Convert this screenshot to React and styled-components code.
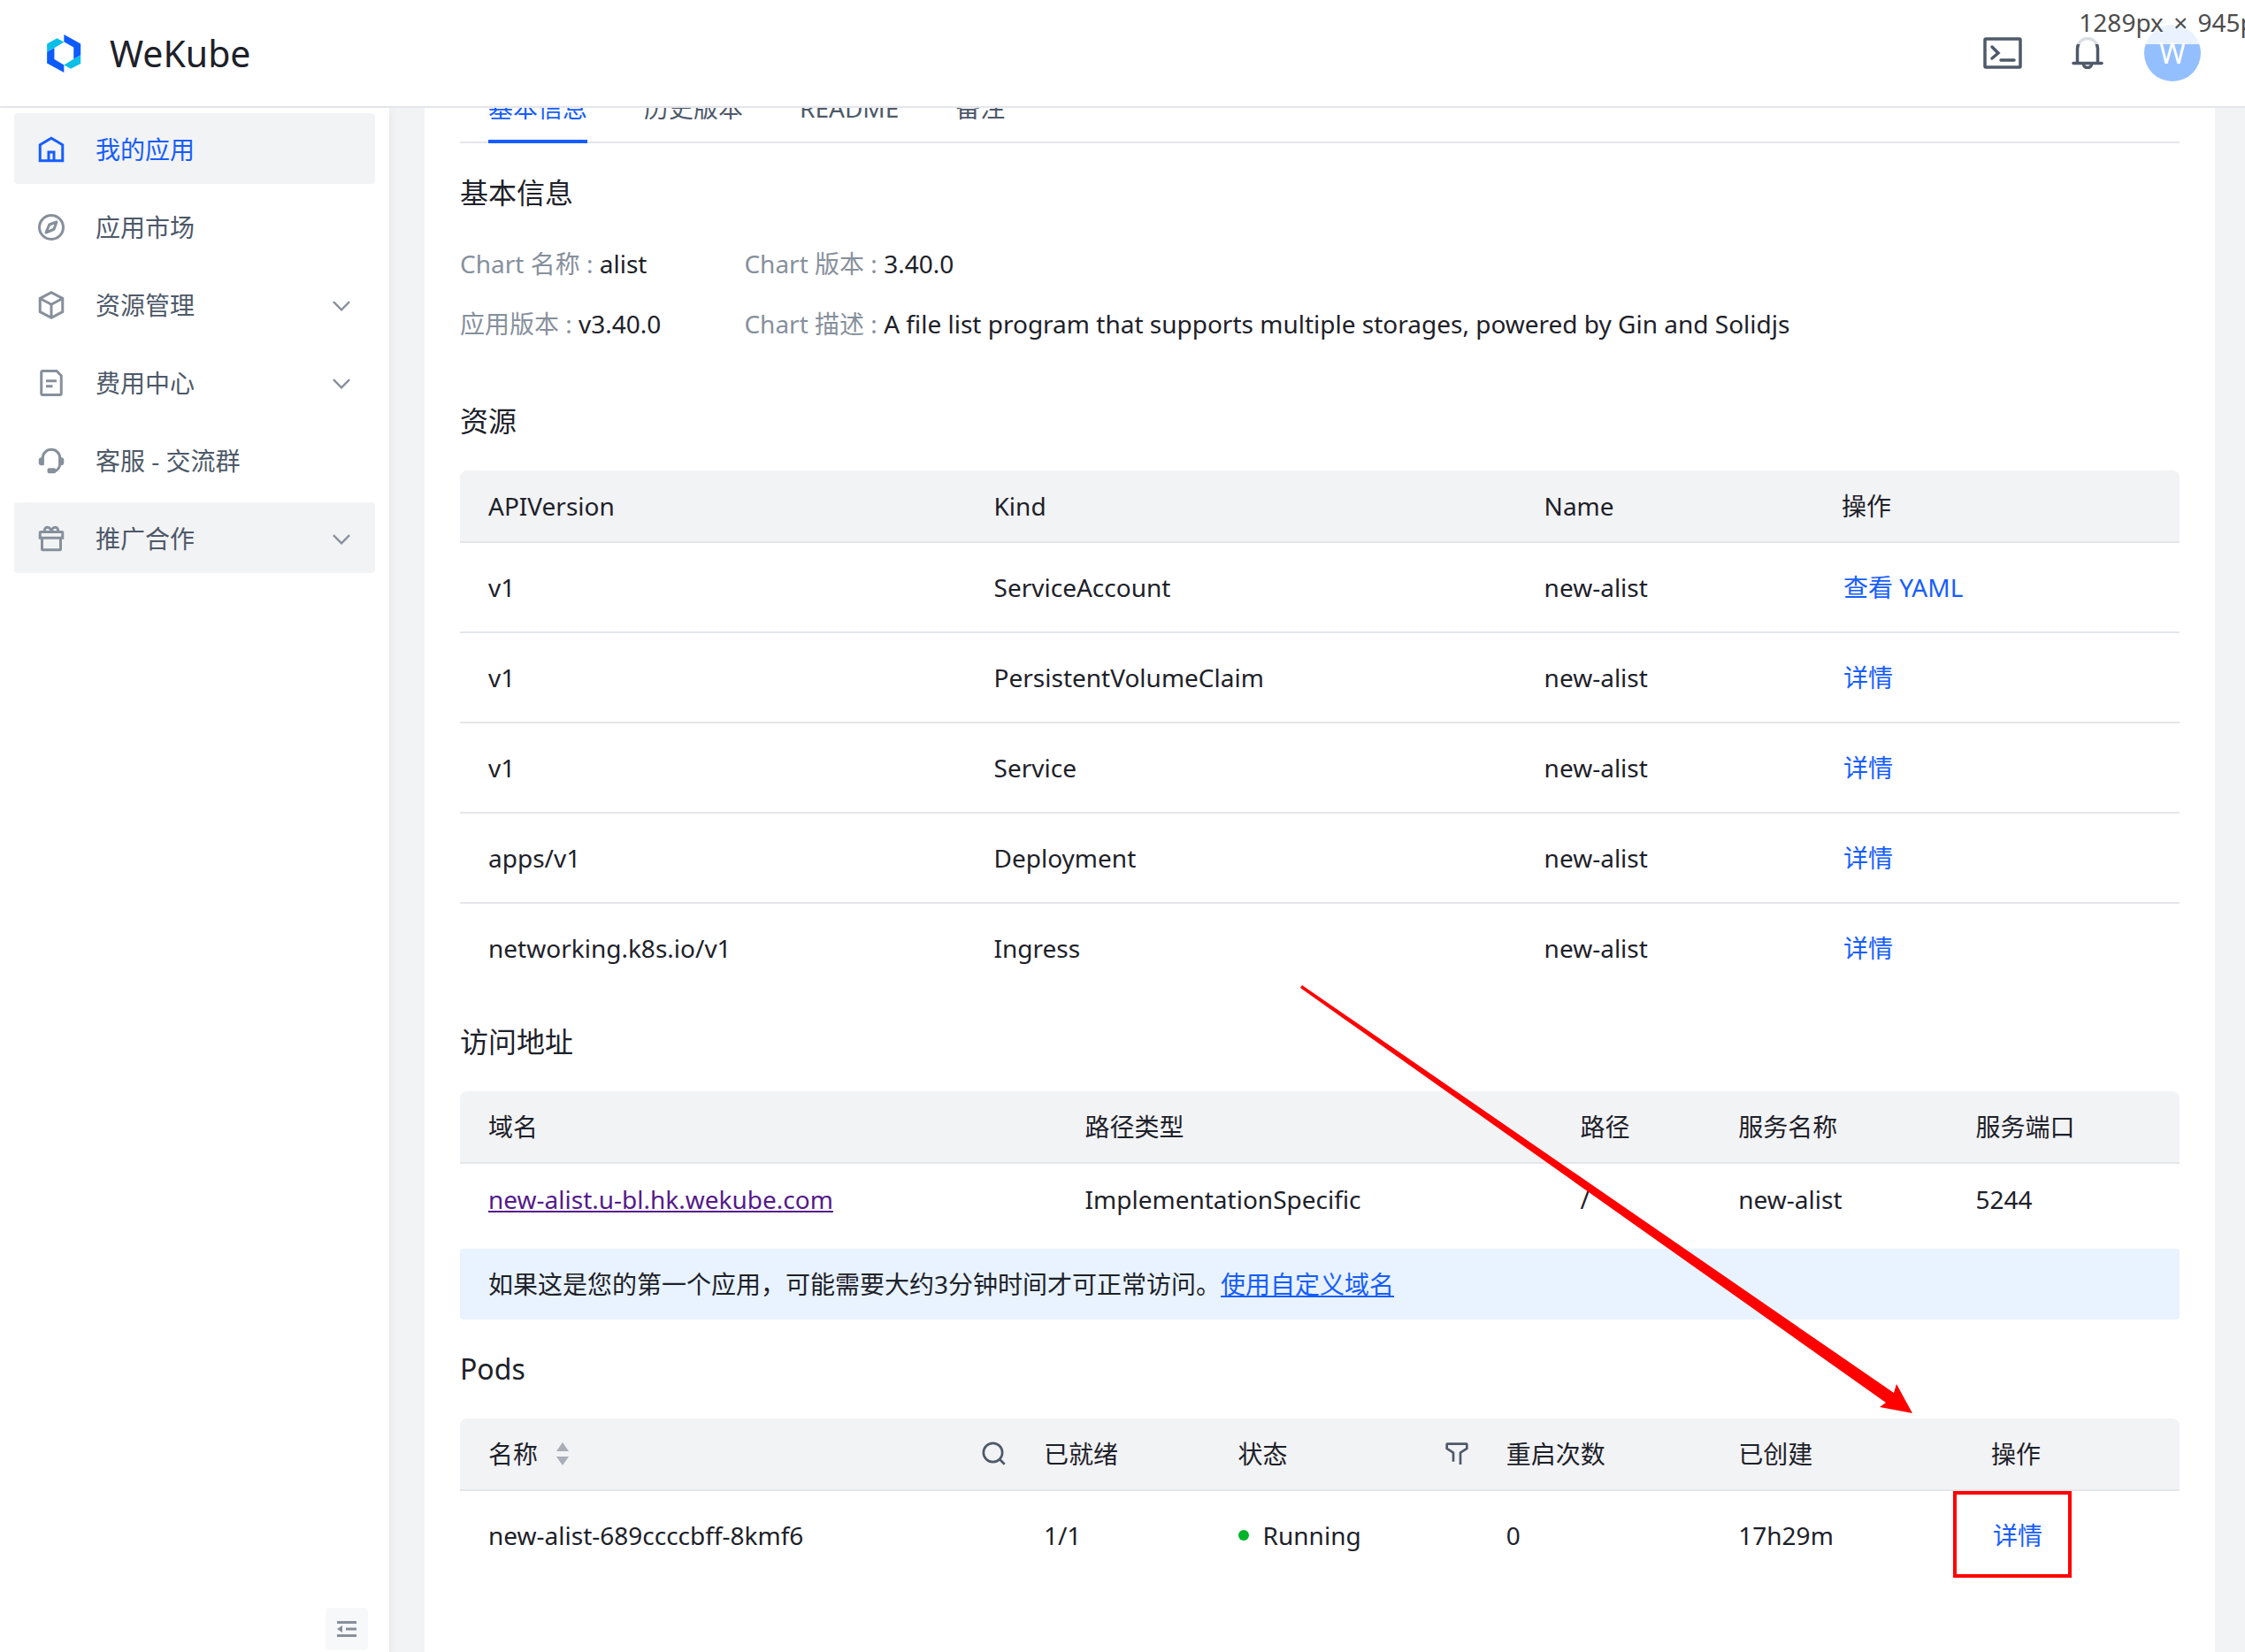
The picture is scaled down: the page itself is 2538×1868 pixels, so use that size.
import React from 'react';
import styled, { createGlobalStyle } from 'styled-components';

const menus = [
  { label: '我的应用', icon: 'home', active: true },
  { label: '应用市场', icon: 'compass' },
  { label: '资源管理', icon: 'cube', sub: true },
  { label: '费用中心', icon: 'file', sub: true },
  { label: '客服 - 交流群', icon: 'service' },
  { label: '推广合作', icon: 'gift', sub: true, hover: true },
];

const tabs = ['基本信息', '历史版本', 'README', '备注'];

const infos = [
  ['Chart 名称', 'alist'],
  ['Chart 版本', '3.40.0'],
  ['应用版本', 'v3.40.0'],
  ['Chart 描述', 'A file list program that supports multiple storages, powered by Gin and Solidjs'],
];

const resources = [
  ['v1', 'ServiceAccount', 'new-alist', '查看 YAML'],
  ['v1', 'PersistentVolumeClaim', 'new-alist', '详情'],
  ['v1', 'Service', 'new-alist', '详情'],
  ['apps/v1', 'Deployment', 'new-alist', '详情'],
  ['networking.k8s.io/v1', 'Ingress', 'new-alist', '详情'],
];

const icons = {
  home: <path d="M7 17 24 7l17 10v24H7V17ZM20 28h8v13h-8V28Z" />,
  compass: (
    <>
      <circle cx="24" cy="24" r="18" />
      <path d="m21 20 11-4-4 11-12 5 5-12Z" strokeLinejoin="round" />
    </>
  ),
  cube: <path d="M24 23 7.652 14.345M24 23l16.366-8.664M24 23v19.438M7 14v20l17 9 17-9V14L24 5 7 14Z" />,
  file: (
    <path d="M16 21h16m-16 8h10m11 13H11a2 2 0 0 1-2-2V8a2 2 0 0 1 2-2h21l7 7v27a2 2 0 0 1-2 2Z" />
  ),
  service: (
    <>
      <path d="M11 29V20c0-7.18 5.82-13 13-13s13 5.82 13 13v8c0 5.784-3.778 10.686-9 12.373" />
      <g fill="currentColor" stroke="none">
        <path d="M13 19v12H9a4 4 0 0 1-4-4v-4a4 4 0 0 1 4-4h4ZM35 19v12h4a4 4 0 0 0 4-4v-4a4 4 0 0 0-4-4h-4Z" />
        <rect x="18" y="35" width="13" height="8" rx="3" />
      </g>
    </>
  ),
  gift: (
    <path d="M8 14h32a1 1 0 0 1 1 1v8H7v-8a1 1 0 0 1 1-1ZM10 24v16a1 1 0 0 0 1 1h26a1 1 0 0 0 1-1V24M24 14c0-4-3-7-6-7s-5 3-4 7M24 14c0-4 3-7 6-7s5 3 4 7" />
  ),
  down: <path d="M39.6 17.443 24.043 33 8.487 17.443" />,
  search: (
    <path d="M33.072 33.071c6.248-6.248 6.248-16.379 0-22.627-6.249-6.249-16.38-6.249-22.628 0-6.248 6.248-6.248 16.379 0 22.627 6.248 6.248 16.38 6.248 22.628 0Zm0 0 8.485 8.485" />
  ),
  filter: (
    <path d="M30 42V22.549a1 1 0 0 1 .463-.844l10.074-6.41A1 1 0 0 0 41 14.45V8a1 1 0 0 0-1-1H8a1 1 0 0 0-1 1v6.451a1 1 0 0 0 .463.844l10.074 6.41a1 1 0 0 1 .463.844V37" />
  ),
};

function Icon({ name, size }) {
  return (
    <StyleIcon viewBox="0 0 48 48" width={size} height={size} aria-hidden="true">
      {icons[name]}
    </StyleIcon>
  );
}

function Logo() {
  return (
    <svg viewBox="156 114 120 130" width="40" height="43" aria-hidden="true">
      <path fill="#0bbfe8" d="M159 146 193 127 217 140 184 160 159 174ZM274 184V214L240 231 217 218 250 198Z" />
      <path fill="#0d5bfb" d="M217 114 274 146V184L250 198V158L217 139ZM217 244 159 212V174L184 160V199L217 218Z" />
    </svg>
  );
}

function Header() {
  return (
    <StyleHeader>
      <StyleBrand href="#">
        <Logo />
        WeKube
      </StyleBrand>
      <StyleActions>
        <StyleHeaderBtn aria-label="终端">
          <svg viewBox="0 0 44 36" width="44" height="36">
            <rect x="2" y="2" width="40" height="32" rx="1" />
            <path d="m10 11 7 7-7 6M20 26h15" strokeLinecap="round" />
          </svg>
        </StyleHeaderBtn>
        <StyleHeaderBtn aria-label="通知">
          <svg viewBox="0 0 36 36" width="36" height="36">
            <path d="M6.5 29V13a11.5 11.5 0 0 1 23 0v16" />
            <path d="M2 29.5h32" strokeLinecap="round" />
            <path d="M13.5 30.5a4.5 4 0 0 0 9 0" />
          </svg>
        </StyleHeaderBtn>
        <StyleAvatar>W</StyleAvatar>
      </StyleActions>
      <StyleSizeTip>
        1289px <span>×</span> 945px
      </StyleSizeTip>
    </StyleHeader>
  );
}

function Sidebar() {
  return (
    <StyleSidebar>
      <StyleMenu>
        {menus.map((menu) => (
          <StyleMenuItem key={menu.label} href="#" $active={menu.active} $filled={menu.active || menu.hover}>
            <Icon name={menu.icon} size={36} />
            <StyleMenuText $active={menu.active}>{menu.label}</StyleMenuText>
            {menu.sub && <Icon name="down" size={28} />}
          </StyleMenuItem>
        ))}
      </StyleMenu>
      <StyleCollapse aria-label="收起菜单">
        <svg viewBox="0 0 24 20" width="24" height="20">
          <path d="M1 2.5h22M11 10h12M1 17.5h22" stroke="currentColor" strokeWidth="3" />
          <path d="M1 10l6-4v8z" fill="currentColor" />
        </svg>
      </StyleCollapse>
    </StyleSidebar>
  );
}

function Columns({ widths }) {
  return (
    <colgroup>
      {widths.map((w, i) => (
        <StyleCol key={i} $w={w} />
      ))}
    </colgroup>
  );
}

function HeadRow({ names }) {
  return (
    <thead>
      <tr>
        {names.map((name) => (
          <StyleTh key={name} scope="col">
            {name}
          </StyleTh>
        ))}
      </tr>
    </thead>
  );
}

function Resources() {
  return (
    <StyleSection>
      <StyleTitle>资源</StyleTitle>
      <StyleTable>
        <Columns widths={[29.4, 32, 17.3, 21.3]} />
        <HeadRow names={['APIVersion', 'Kind', 'Name', '操作']} />
        <tbody>
          {resources.map(([version, kind, name, action]) => (
            <tr key={kind}>
              <StyleTd>{version}</StyleTd>
              <StyleTd>{kind}</StyleTd>
              <StyleTd>{name}</StyleTd>
              <StyleTd>
                <StyleAction href="#">{action}</StyleAction>
              </StyleTd>
            </tr>
          ))}
        </tbody>
      </StyleTable>
    </StyleSection>
  );
}

function Address() {
  return (
    <StyleSection>
      <StyleTitle>访问地址</StyleTitle>
      <StyleTable>
        <Columns widths={[34.7, 28.8, 9.2, 13.8, 13.5]} />
        <HeadRow names={['域名', '路径类型', '路径', '服务名称', '服务端口']} />
        <tbody>
          <tr>
            <StyleTd $compact>
              <StyleLink href="#" $visited>
                new-alist.u-bl.hk.wekube.com
              </StyleLink>
            </StyleTd>
            <StyleTd $compact>ImplementationSpecific</StyleTd>
            <StyleTd $compact>/</StyleTd>
            <StyleTd $compact>new-alist</StyleTd>
            <StyleTd $compact>5244</StyleTd>
          </tr>
        </tbody>
      </StyleTable>
      <StyleNotice>
        如果这是您的第一个应用，可能需要大约3分钟时间才可正常访问。
        <StyleLink href="#">使用自定义域名</StyleLink>
      </StyleNotice>
    </StyleSection>
  );
}

function Pods() {
  return (
    <StyleSection>
      <StyleTitle>Pods</StyleTitle>
      <StyleTable>
        <Columns widths={[32.3, 11.3, 15.6, 13.5, 14.7, 12.6]} />
        <thead>
          <tr>
            <StyleTh scope="col">
              <StyleThTools>
                名称
                <StyleSort aria-label="排序">
                  <svg viewBox="0 0 16 26" width="16" height="26" fill="currentColor">
                    <path d="M8 0l7 10H1zM8 26l7-10H1z" />
                  </svg>
                </StyleSort>
                <StyleTool aria-label="搜索名称">
                  <Icon name="search" size={32} />
                </StyleTool>
              </StyleThTools>
            </StyleTh>
            <StyleTh scope="col">已就绪</StyleTh>
            <StyleTh scope="col">
              <StyleThTools>
                状态
                <StyleTool aria-label="筛选状态">
                  <Icon name="filter" size={32} />
                </StyleTool>
              </StyleThTools>
            </StyleTh>
            <StyleTh scope="col">重启次数</StyleTh>
            <StyleTh scope="col">已创建</StyleTh>
            <StyleTh scope="col">操作</StyleTh>
          </tr>
        </thead>
        <tbody>
          <tr>
            <StyleTd>new-alist-689ccccbff-8kmf6</StyleTd>
            <StyleTd>1/1</StyleTd>
            <StyleTd>
              <StyleStatus>Running</StyleStatus>
            </StyleTd>
            <StyleTd>0</StyleTd>
            <StyleTd>17h29m</StyleTd>
            <StyleTd>
              <StyleAction href="#">详情</StyleAction>
            </StyleTd>
          </tr>
        </tbody>
      </StyleTable>
      {/* 标注: 箭头 + 红框 */}
      <StyleMark viewBox="0 0 876 676" width="876" height="676" aria-hidden="true">
        <path fill="#f00" d="M2 2 671 463 674 453 692 486 655 479 662 474 0 5Z" />
        <rect x="740" y="576" width="130" height="94" fill="none" stroke="#f00" strokeWidth="4" />
      </StyleMark>
    </StyleSection>
  );
}

function App() {
  return (
    <StylePage>
      <GlobalStyle />
      <Header />
      <StyleBody>
        <Sidebar />
        <StyleMain>
          <StyleCard>
            <StyleTabs role="tablist">
              {tabs.map((tab, i) => (
                <StyleTab key={tab} role="tab" aria-selected={i === 0} $active={i === 0}>
                  {tab}
                </StyleTab>
              ))}
            </StyleTabs>
            <StyleSection>
              <StyleTitle>基本信息</StyleTitle>
              <StyleInfo>
                {infos.map(([label, value]) => (
                  <StyleInfoItem key={label}>
                    <dt>{label} :&nbsp;</dt>
                    <dd>{value}</dd>
                  </StyleInfoItem>
                ))}
              </StyleInfo>
            </StyleSection>
            <Resources />
            <Address />
            <Pods />
          </StyleCard>
        </StyleMain>
      </StyleBody>
    </StylePage>
  );
}

const GlobalStyle = createGlobalStyle`
  * {
    box-sizing: border-box;
    margin: 0;
    padding: 0;
  }

  body {
    font: 28px/40px 'Noto Sans', 'Noto Sans CJK SC', sans-serif;
    color: #1d2129;
  }

  button {
    border: none;
    background: none;
    font: inherit;
    color: inherit;
    cursor: pointer;
  }

  a {
    color: inherit;
    text-decoration: none;
  }
`;

const StylePage = styled.div`
  height: 100vh;
  overflow: hidden;

  display: flex;
  flex-direction: column;
`;

const StyleHeader = styled.header`
  position: relative;
  flex: none;
  height: 122px;
  padding: 0 50px 0 52px;
  border-bottom: 2px solid #e5e6eb;
  background-color: #fff;

  display: flex;
  justify-content: space-between;
  align-items: center;
`;

const StyleBrand = styled.a`
  display: flex;
  align-items: center;
  gap: 32px;

  font-size: 41px;
  line-height: 60px;
`;

const StyleActions = styled.div`
  display: flex;
  align-items: center;
  gap: 32px;
`;

const StyleHeaderBtn = styled.button`
  width: 64px;
  height: 64px;
  color: #4e5969;

  display: flex;
  justify-content: center;
  align-items: center;

  svg {
    fill: none;
    stroke: currentColor;
    stroke-width: 3.5;
  }
`;

const StyleAvatar = styled.div`
  width: 64px;
  height: 64px;
  border-radius: 50%;
  background-color: #94bfff;
  color: #fff;

  font-size: 32px;
  line-height: 64px;
  text-align: center;
`;

const StyleSizeTip = styled.div`
  position: absolute;
  top: 0;
  right: -34px;
  height: 50px;
  padding: 5px 8px;
  background-color: rgba(255, 255, 255, 0.8);
  color: #4d4d4d;
  white-space: nowrap;

  span {
    margin: 0 4px;
  }
`;

const StyleBody = styled.div`
  flex: 1;
  min-height: 0;

  display: flex;
`;

const StyleSidebar = styled.aside`
  position: relative;
  flex: none;
  width: 440px;
  padding: 6px 16px 2px;
  background-color: #fff;
  box-shadow: 0 4px 10px rgba(0, 0, 0, 0.08);

  display: flex;
  flex-direction: column;
  justify-content: space-between;
`;

const StyleMenu = styled.nav`
  display: flex;
  flex-direction: column;
  gap: 8px;
`;

const StyleMenuItem = styled.a`
  height: 80px;
  padding: 2px 24px 0;
  border-radius: 4px;
  background-color: ${({ $filled }) => ($filled ? '#f2f3f5' : 'transparent')};
  color: ${({ $active }) => ($active ? '#165dff' : '#86909c')};

  display: flex;
  align-items: center;
  gap: 32px;
`;

const StyleMenuText = styled.span`
  flex: 1;
  color: ${({ $active }) => ($active ? '#165dff' : '#4e5969')};
`;

const StyleCollapse = styled.button`
  width: 48px;
  height: 48px;
  margin-right: 8px;
  border-radius: 4px;
  background-color: #f7f8fa;
  color: #86909c;

  display: flex;
  align-self: flex-end;
  justify-content: center;
  align-items: center;
`;

const StyleIcon = styled.svg`
  flex: none;
  fill: none;
  stroke: currentColor;
  stroke-width: 4;
`;

const StyleMain = styled.main`
  flex: 1;
  min-width: 0;
  overflow: hidden;
  padding: 0 34px 0 40px;
  background-color: #f2f3f5;
`;

const StyleCard = styled.div`
  /* scrolled: the tabs sit half under the header */
  margin-top: -36px;
  min-height: calc(100% + 36px);
  padding: 0 40px 40px;
  background-color: #fff;
`;

const StyleTabs = styled.div`
  padding: 0 32px;
  box-shadow: inset 0 -2px #e5e6eb;

  display: flex;
  gap: 64px;
`;

const StyleTab = styled.button`
  padding: 16px 0;
  border-bottom: 4px solid ${({ $active }) => ($active ? '#165dff' : 'transparent')};
  color: ${({ $active }) => ($active ? '#165dff' : '#4e5969')};
`;

const StyleSection = styled.section`
  position: relative;
  margin-top: 32px;
`;

const StyleTitle = styled.h2`
  margin-bottom: 32px;

  font-size: 32px;
  font-weight: 400;
  line-height: 48px;
`;

const StyleInfo = styled.dl`
  padding: 4px 0 34px;

  display: grid;
  grid-template-columns: max-content 1fr;
  gap: 28px 94px;
`;

const StyleInfoItem = styled.div`
  display: flex;

  dt {
    color: #86909c;
  }
`;

const StyleTable = styled.table`
  width: 100%;
  border-collapse: separate;
  border-spacing: 0;
  table-layout: fixed;
`;

const StyleCol = styled.col`
  width: ${({ $w }) => $w}%;
`;

const StyleTh = styled.th`
  padding: 20px 0 20px 32px;
  border-bottom: 2px solid #e5e6eb;
  background-color: #f2f3f5;
  font-weight: 400;
  text-align: left;

  &:first-child {
    border-top-left-radius: 8px;
  }

  &:last-child {
    border-top-right-radius: 8px;
  }
`;

const StyleThTools = styled.div`
  padding-right: 8px;

  display: flex;
  align-items: center;
`;

const StyleSort = styled.button`
  margin-left: 20px;
  color: #a9aeb8;

  display: flex;
`;

const StyleTool = styled.button`
  margin-left: auto;
  color: #4e5969;

  display: flex;
`;

const StyleTd = styled.td`
  padding: ${({ $compact }) => ($compact ? 20 : 30)}px 0 ${({ $compact }) => ($compact ? 20 : 30)}px 32px;
  border-bottom: 2px solid #e5e6eb;

  tr:last-child > & {
    border-bottom: none;
  }
`;

const StyleAction = styled.a`
  padding: 0 2px;
  color: #165dff;
`;

const StyleLink = styled.a`
  color: ${({ $visited }) => ($visited ? '#551a8b' : '#165dff')};
  text-decoration: underline;
`;

const StyleNotice = styled.p`
  margin-top: 16px;
  padding: 20px 32px;
  border-radius: 4px;
  background-color: #e8f3ff;
`;

const StyleStatus = styled.span`
  display: flex;
  align-items: center;
  gap: 16px;

  &::before {
    content: '';
    width: 12px;
    height: 12px;
    border-radius: 50%;
    background-color: #00b42a;
  }
`;

const StyleMark = styled.svg`
  position: absolute;
  top: -412px;
  right: 118px;
  pointer-events: none;
`;

export default App;
